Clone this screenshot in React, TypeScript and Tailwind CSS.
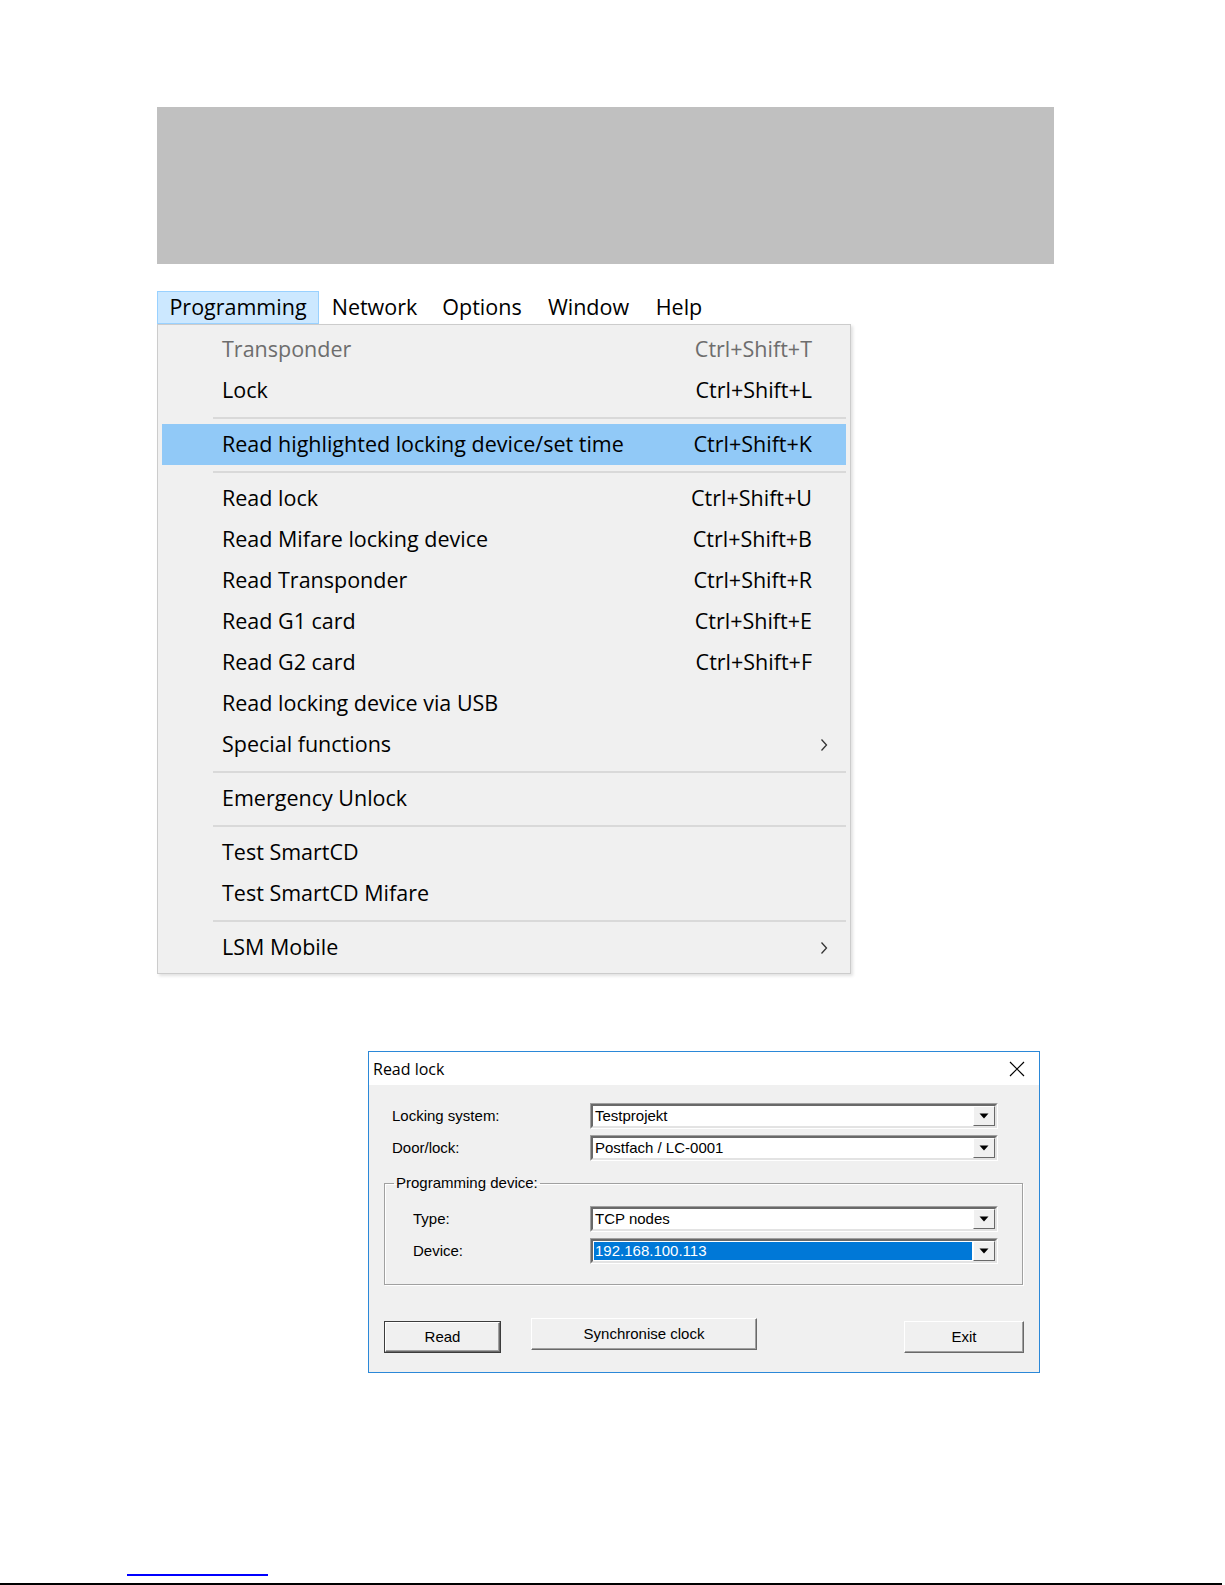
import React from "react";

type MenuRow =
  | { kind: "item"; label: string; shortcut?: string; disabled?: boolean; active?: boolean; submenu?: boolean }
  | { kind: "sep" };

const menuRows: MenuRow[] = [
  { kind: "item", label: "Transponder", shortcut: "Ctrl+Shift+T", disabled: true },
  { kind: "item", label: "Lock", shortcut: "Ctrl+Shift+L" },
  { kind: "sep" },
  { kind: "item", label: "Read highlighted locking device/set time", shortcut: "Ctrl+Shift+K", active: true },
  { kind: "sep" },
  { kind: "item", label: "Read lock", shortcut: "Ctrl+Shift+U" },
  { kind: "item", label: "Read Mifare locking device", shortcut: "Ctrl+Shift+B" },
  { kind: "item", label: "Read Transponder", shortcut: "Ctrl+Shift+R" },
  { kind: "item", label: "Read G1 card", shortcut: "Ctrl+Shift+E" },
  { kind: "item", label: "Read G2 card", shortcut: "Ctrl+Shift+F" },
  { kind: "item", label: "Read locking device via USB" },
  { kind: "item", label: "Special functions", submenu: true },
  { kind: "sep" },
  { kind: "item", label: "Emergency Unlock" },
  { kind: "sep" },
  { kind: "item", label: "Test SmartCD" },
  { kind: "item", label: "Test SmartCD Mifare" },
  { kind: "sep" },
  { kind: "item", label: "LSM Mobile", submenu: true },
];

const menuBar = [
  { label: "Programming", w: "w-[162px]", open: true },
  { label: "Network", w: "w-[111px]" },
  { label: "Options", w: "w-[104px]" },
  { label: "Window", w: "w-[109px]" },
  { label: "Help", w: "w-[72px]" },
];

function Chevron() {
  return (
    <svg width="8" height="14" viewBox="0 0 8 14" className="text-[#333]">
      <path d="M1.5 1.5 L6.5 7 L1.5 12.5" fill="none" stroke="currentColor" strokeWidth="1.3" />
    </svg>
  );
}

function ProgrammingMenu() {
  return (
    <div className="ml-[157px] font-['Open_Sans',sans-serif] text-[21.5px] text-black">
      <div className="flex h-[33px]">
        {menuBar.map((m) => (
          <div
            key={m.label}
            className={
              m.open
                ? `${m.w} flex items-center justify-center border border-[#99d1ff] bg-[#cce8ff]`
                : `${m.w} flex items-center justify-center`
            }
          >
            {m.label}
          </div>
        ))}
      </div>
      <div className="w-[694px] border border-[#cccccc] bg-[#f0f0f0] px-[4px] pb-[5px] pt-[4px] shadow-[2px_2px_3px_rgba(0,0,0,0.12)]">
        {menuRows.map((row, i) =>
          row.kind === "sep" ? (
            <div key={i} className="h-[13px] pl-[51px] pt-[6px]">
              <div className="h-[2px] bg-[#d9d9d9]" />
            </div>
          ) : (
            <div
              key={i}
              className={`flex h-[41px] items-center pl-[60px] ${row.active ? "bg-[#91c9f7]" : ""} ${
                row.submenu ? "pr-[18px]" : "pr-[34px]"
              } ${row.disabled ? "text-[#6d6d6d]" : ""}`}
            >
              <span className="flex-1">{row.label}</span>
              {row.shortcut ? <span>{row.shortcut}</span> : null}
              {row.submenu ? <Chevron /> : null}
            </div>
          )
        )}
      </div>
    </div>
  );
}

function ComboBox({ value, selected }: { value: string; selected?: boolean }) {
  return (
    <div className="h-[26px] w-[408px] border border-b-white border-l-[#a0a0a0] border-r-white border-t-[#a0a0a0]">
      <div className="flex h-full border-2 border-b-[#e3e3e3] border-l-[#696969] border-r-[#e3e3e3] border-t-[#696969] bg-white">
        <div className="flex flex-1 items-center p-[1px]">
          <div
            className={`flex h-full w-full items-center pl-[1px] ${selected ? "bg-[#0078d7] text-white" : "text-black"}`}
          >
            {value}
          </div>
        </div>
        <div className="flex w-[22px] items-center justify-center border border-b-[#696969] border-l-white border-r-[#696969] border-t-white bg-[#f0f0f0]">
          <svg width="10" height="6" viewBox="0 0 10 6">
            <path d="M0.5 0.5 H9.5 L5 5.5 Z" fill="#000" />
          </svg>
        </div>
      </div>
    </div>
  );
}

function WinButton({ label, w, isDefault }: { label: string; w: string; isDefault?: boolean }) {
  return (
    <div className={`${w} h-[32px] ${isDefault ? "border border-[#3c3c3c]" : ""}`}>
      <div className="flex h-full items-center justify-center border border-b-[#696969] border-l-white border-r-[#696969] border-t-white bg-[#f0f0f0] shadow-[inset_-1px_-1px_0_#a0a0a0]">
        {label}
      </div>
    </div>
  );
}

function ReadLockDialog() {
  return (
    <div className="ml-[368px] mt-[77px] h-[322px] w-[672px] border border-[#2b88d8] bg-[#f0f0f0]">
      <div className="flex h-[33px] items-center justify-between bg-white pl-[4px] pr-[14px] font-['Open_Sans',sans-serif] text-[16px] text-black">
        <span>Read lock</span>
        <svg width="16" height="16" viewBox="0 0 16 16">
          <path d="M1 1 L15 15 M15 1 L1 15" stroke="#000" strokeWidth="1.2" />
        </svg>
      </div>
      <div className="px-[15px] pt-[18px] font-['Liberation_Sans',Arial,sans-serif] text-[15px] text-black">
        <div className="flex items-center">
          <span className="w-[206px] pl-[8px]">Locking system:</span>
          <ComboBox value="Testprojekt" />
        </div>
        <div className="mt-[6px] flex items-center">
          <span className="w-[206px] pl-[8px]">Door/lock:</span>
          <ComboBox value="Postfach / LC-0001" />
        </div>
        <fieldset className="mt-[13px] h-[111px] w-[639px] border border-[#a0a0a0] shadow-[inset_1px_1px_0_#fff,1px_1px_0_#fff]">
          <legend className="ml-[9px] px-[2px] leading-[18px]">Programming device:</legend>
          <div className="pt-[14px]">
            <div className="flex items-center">
              <span className="w-[205px] pl-[28px]">Type:</span>
              <ComboBox value="TCP nodes" />
            </div>
            <div className="mt-[6px] flex items-center">
              <span className="w-[205px] pl-[28px]">Device:</span>
              <ComboBox value="192.168.100.113" selected />
            </div>
          </div>
        </fieldset>
        <div className="mt-[33px] flex items-start">
          <div className="mt-[3px]">
            <WinButton label="Read" w="w-[117px]" isDefault />
          </div>
          <div className="ml-[30px]">
            <WinButton label="Synchronise clock" w="w-[226px]" />
          </div>
          <div className="ml-auto mt-[3px]">
            <WinButton label="Exit" w="w-[120px]" />
          </div>
        </div>
      </div>
    </div>
  );
}

export default function App() {
  return (
    <div className="flex h-[1585px] w-[1225px] flex-col bg-white pt-[107px]">
      <div className="ml-[157px] h-[157px] w-[897px] bg-[#c0c0c0]" />
      <div className="mt-[27px]">
        <ProgrammingMenu />
      </div>
      <ReadLockDialog />
      <div className="ml-[127px] mt-[201px] h-[2px] w-[141px] bg-[#0000ff]" />
      <div className="mt-[7px] h-[2px] w-[1222px] bg-black" />
    </div>
  );
}
